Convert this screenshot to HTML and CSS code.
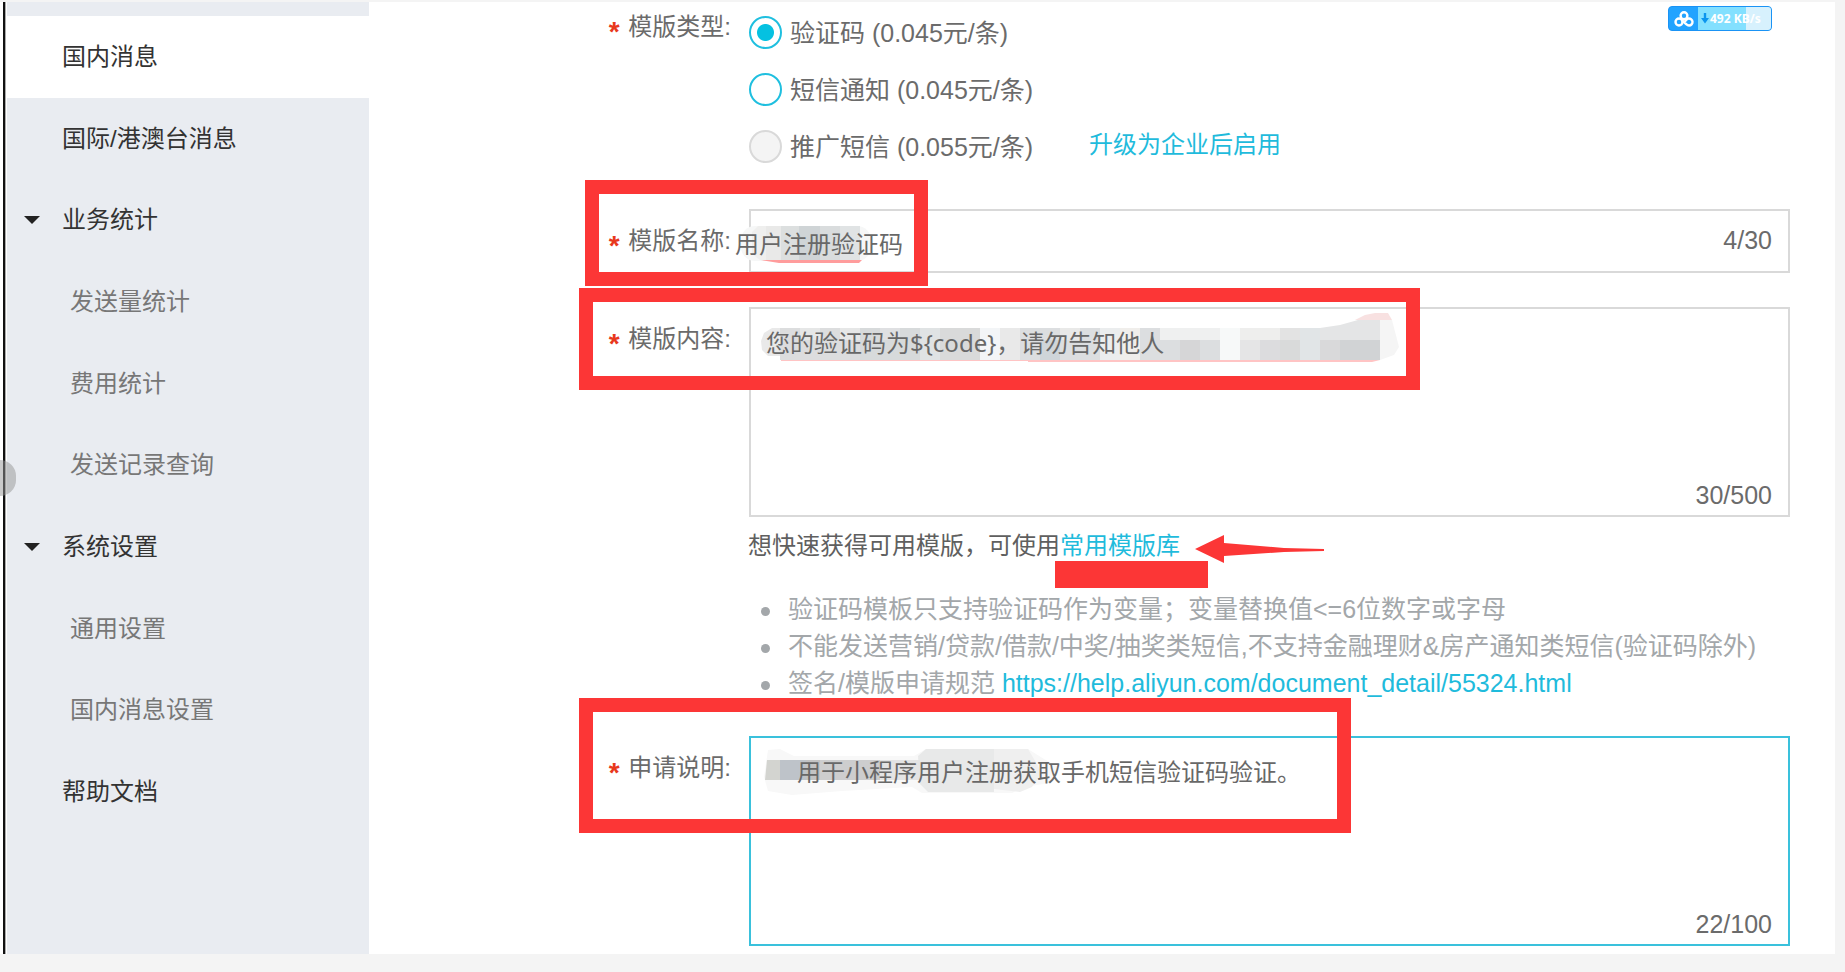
FILE: index.html
```
<!DOCTYPE html>
<html lang="zh-CN">
<head>
<meta charset="utf-8">
<title>短信模版申请</title>
<link rel="stylesheet" href="styles.css">
</head>
<body>
<div class="page">
  <aside class="sidebar">
    <nav>
      <ul class="menu">
        <li><a class="item active" href="#">国内消息</a></li>
        <li><a class="item" href="#">国际/港澳台消息</a></li>
        <li><a class="item group" href="#">业务统计</a></li>
        <li><a class="item sub" href="#">发送量统计</a></li>
        <li><a class="item sub" href="#">费用统计</a></li>
        <li><a class="item sub" href="#">发送记录查询</a></li>
        <li><a class="item group" href="#">系统设置</a></li>
        <li><a class="item sub" href="#">通用设置</a></li>
        <li><a class="item sub" href="#">国内消息设置</a></li>
        <li><a class="item" href="#">帮助文档</a></li>
      </ul>
    </nav>
    <button class="handle" type="button" aria-label="收起菜单"></button>
  </aside>

  <main class="main">
    <div class="speed">
      <svg class="cloud" viewBox="0 0 20 16" fill="none" stroke="#fff" stroke-width="2.4"><circle cx="10" cy="4.7" r="3.4"/><circle cx="5" cy="11" r="3.5"/><path d="M7.500 8.600L12.400 13.300A3.500 3.500 0 1 0 12 9.200L10.500 10.800"/></svg>
      <span class="rate"><svg class="down" viewBox="0 0 8 11"><path d="M2.800 0h2.400v5H8L4 10.500 0 5h2.800z" fill="#0c95ee"/></svg>492 KB/s</span>
    </div>

    <form class="form">
      <div class="row types" role="radiogroup" aria-labelledby="type-label">
        <span class="label" id="type-label"><i>*</i> 模版类型:</span>
        <div class="options">
          <div class="option"><input type="radio" name="type" id="t1" checked><label for="t1">验证码 (0.045元/条)</label></div>
          <div class="option"><input type="radio" name="type" id="t2"><label for="t2">短信通知 (0.045元/条)</label></div>
          <div class="option"><input type="radio" name="type" id="t3" disabled><label for="t3">推广短信 (0.055元/条)</label><a class="upgrade" href="#">升级为企业后启用</a></div>
        </div>
      </div>

      <div class="row">
        <label class="label" for="name"><i>*</i> 模版名称:</label>
        <div class="field short">
          <svg class="smudge" width="130" height="64" viewBox="741 209 130 64">
            <rect x="741" y="226" width="130" height="35" rx="14" fill="#f6f7f7"/>
            <path d="M758 226h8v34h-6l-8-6v-22z" fill="#efefee"/>
            <path d="M766 226h15v34h-15z" fill="#e9e9e8"/><path d="M781 226h18v34h-18z" fill="#dcdfdf"/>
            <path d="M799 226h21v34h-21z" fill="#cfd4d6"/><path d="M820 226h20v34h-20z" fill="#d9dcdd"/>
            <path d="M840 226h20v34h-20z" fill="#e0e3e4"/>
            <path d="M761 260h101l-3 3h-80z" fill="#ff9c9c"/>
          </svg>
          <input type="text" id="name" value="用户注册验证码">
          <span class="count">4/30</span>
        </div>
        <span class="mark mark-name"></span>
      </div>

      <div class="row">
        <label class="label" for="content"><i>*</i> 模版内容:</label>
        <div class="field tall">
          <svg class="smudge inner" width="660" height="68" viewBox="749 307 660 68">
            <path d="M780 328h-8l-8 5-3 8 1 9 6 6h12z" fill="#e9e9e9"/>
            <path d="M780 328h80v32h-80z" fill="#dcddde"/><path d="M800 328h20v12h-20zM840 328h20v12h-20z" fill="#e6e7e7"/>
            <path d="M860 328h80v32h-80z" fill="#d7dadb"/><path d="M880 328h20v12h-20z" fill="#dfe0e2"/><path d="M920 328h20v32h-20z" fill="#e0e3e4"/>
            <path d="M940 328h40v32h-40z" fill="#d9dada"/><path d="M980 328h20v32h-20z" fill="#f3f5f7"/>
            <path d="M1000 328h20v32h-20z" fill="#e9e9e9"/><path d="M1020 328h80v32h-80z" fill="#dcdee0"/>
            <path d="M1040 340h20v20h-20z" fill="#cfd5d9"/><path d="M1060 328h20v12h-20z" fill="#e9e9e8"/>
            <path d="M1100 328h20v32h-20z" fill="#ebedee"/><path d="M1120 328h20v32h-20z" fill="#f0eeeb"/>
            <path d="M1140 328h80v32h-80z" fill="#dcdee0"/><path d="M1160 328h60v12h-60z" fill="#eff0f0"/>
            <path d="M1180 340h20v20h-20z" fill="#d6d6d7"/><path d="M1220 328h20v32h-20z" fill="#f7f9f9"/>
            <path d="M1240 328h40v32h-40z" fill="#e5e5e6"/><path d="M1240 328h40v12h-40z" fill="#eeeeed"/><path d="M1260 340h20v20h-20z" fill="#dcdcde"/>
            <path d="M1280 328h20v32h-20z" fill="#d9dada"/><path d="M1280 328h20v12h-20z" fill="#e3e3e3"/>
            <path d="M1300 328h20v32h-20z" fill="#e1e5e7"/><path d="M1320 328l20-3 18-5h22v40h-60z" fill="#e4e5e6"/>
            <path d="M1320 340h20v20h-20z" fill="#d9d9da"/><path d="M1340 340h40v20h-40z" fill="#d1d3d5"/>
            <path d="M1355 320l10-5 10-2h13l4 7z" fill="#f8e1e1"/><path d="M1380 320h12l7 27-5 8-14 5z" fill="#f5f5f5"/>
            <path d="M781 360h599l-8 2h-344v-1h-247z" fill="#ffc4c4"/>
          </svg>
          <textarea id="content">您的验证码为${code}，请勿告知他人</textarea>
          <span class="count">30/500</span>
        </div>
        <span class="mark mark-content"></span>
      </div>

      <div class="help">
        <p class="tip">想快速获得可用模版，可使用<a href="#">常用模版库</a>
          <svg class="arrow" width="130" height="54" viewBox="1195 535 130 54"><path d="M1195 549l29-14v8l60 5 40 1v2l-40 1-60 4v7z" fill="#fc3636"/></svg>
          <span class="bar"></span>
        </p>
        <ul class="notes">
          <li>验证码模板只支持验证码作为变量；变量替换值&lt;=6位数字或字母</li>
          <li>不能发送营销/贷款/借款/中奖/抽奖类短信,不支持金融理财&amp;房产通知类短信(验证码除外)</li>
          <li>签名/模版申请规范 <a href="#">https://help.aliyun.com/document_detail/55324.html</a></li>
        </ul>
      </div>

      <div class="row">
        <label class="label" for="desc"><i>*</i> 申请说明:</label>
        <div class="field tall focused">
          <svg class="smudge inner" width="320" height="68" viewBox="749 736 320 68">
            <path d="M768 750l12-1 14 7h120l12-7h102l16 10 14 8-8 16-26 4-12 6h-90l-10-6-70 4-50 4-24-4-4-14z" fill="#f8f8f8"/>
            <path d="M918 756l8-7h68v43h-66l-8-8z" fill="#e8e9e9"/><path d="M994 749h34l6 10 8 14-10 14-12 5-26-3z" fill="#efefef"/>
            <path d="M767 760h13v20h-15z" fill="#d3d4d0"/><path d="M780 760h26v20h-26z" fill="#bec3c9"/>
            <path d="M806 760h14v20h-14z" fill="#c3c3c3"/><path d="M820 760h60v20h-60z" fill="#cdcdce"/>
            <path d="M880 760h40v20h-40z" fill="#e3e3e4"/>
          </svg>
          <textarea id="desc" class="indent">用于小程序用户注册获取手机短信验证码验证。</textarea>
          <span class="count">22/100</span>
        </div>
        <span class="mark mark-desc"></span>
      </div>
    </form>
  </main>
</div>
</body>
</html>
```
FILE: styles.css
```
* { box-sizing: border-box; }
body {
  margin: 0;
  background: #f4f4f4;
  color: #6b6b6b;
  font: 24px/36px "Liberation Sans", "Noto Sans CJK SC", sans-serif;
}
a { color: #1fbbdc; text-decoration: none; }
ul { list-style: none; margin: 0; padding: 0; }
p { margin: 0; }

.page {
  display: flex;
  min-height: calc(100vh - 20px);
  margin: 2px 10px 18px 0;
  background: #fff;
}

.sidebar {
  position: relative;
  flex: none;
  width: 369px;
  padding-left: 7px;
  background: linear-gradient(90deg, #fff 3px, #111 3px, #111 5px, #aaa 5px, #aaa 6px, #fff 6px, #fff 7px, #e9ecf1 7px);
}
.menu {
  display: grid;
  grid-template-rows: repeat(10, 1fr);
  height: 817px;
  margin-top: 14px;
}
.item {
  display: flex;
  align-items: center;
  height: 100%;
  padding-left: 55px;
  position: relative;
  color: #333;
}
.item.active { background: #fff; }
.item.sub { padding-left: 63px; color: #777; }
.group::before {
  content: "";
  position: absolute;
  left: 17px;
  border: 8px solid transparent;
  border-top-color: #222;
  border-bottom: 0;
}
.handle {
  position: absolute;
  left: 0;
  top: 458px;
  width: 16px;
  height: 36px;
  padding: 0;
  border: 0;
  border-radius: 0 18px 18px 0;
  background: rgba(150, 150, 150, .5);
}

.main { position: relative; flex: 1; min-width: 0; }
.form { padding: 2px 45px 8px 0; }

.speed {
  position: absolute;
  top: 4px;
  right: 63px;
  display: flex;
  width: 104px;
  height: 25px;
  overflow: hidden;
  border: 1px solid #1a93f5;
  border-radius: 4px;
  background: #22a3ff;
}
.cloud { width: 20px; height: 16px; margin: 4px 4px 0 5px; }
.rate {
  flex: 1;
  display: flex;
  align-items: center;
  gap: 1px;
  padding-left: 3px;
  background: linear-gradient(90deg, #83e0ff 48px, #d7f1fd 48px);
  color: #fff;
  font: bold 12px/23px "Noto Sans", sans-serif;
  white-space: nowrap;
}
.down { width: 8px; height: 11px; }

.row { position: relative; display: flex; gap: 18px; }
.row + .row { margin-top: 34px; }
.label { flex: none; width: 362px; padding-top: 14px; text-align: right; }
.label i {
  margin-right: 2px;
  color: #e8391d;
  font-size: 28px;
  font-style: normal;
  font-weight: bold;
  line-height: 24px;
  vertical-align: -6px;
}
.types .label { padding-top: 5px; }

.option { display: flex; align-items: center; height: 57px; font-size: 25px; }
.option input {
  appearance: none;
  width: 33px;
  height: 33px;
  margin: 0 8px 0 0;
  border: 2px solid #1fbfdf;
  border-radius: 50%;
  background: #fff;
}
.option input:checked { background: radial-gradient(circle, #05c1e1 8px, #fff 9px); }
.option input:disabled { border-color: #d9d9d9; background: #f4f4f4; }
.upgrade { margin-left: 56px; padding-bottom: 4px; font-size: 24px; }

.field {
  position: relative;
  flex: 1;
  display: flex;
  min-width: 0;
  border: 2px solid #d9d9d9;
}
.field.short { height: 64px; }
.field.tall { height: 210px; }
.field.focused { border-color: #3ac1dc; }
.field input, .field textarea {
  position: relative;
  flex: 1;
  min-width: 0;
  border: 0;
  outline: 0;
  background: none;
  color: #686868;
  font: 24px/36px "Noto Sans", "Noto Sans CJK SC", sans-serif;
}
.field input { margin-left: -16px; padding: 5px 120px 0 0; }
.field textarea { padding: 16px 120px 0 15px; resize: none; overflow: hidden; }
.field textarea.indent { padding-left: 46px; }
.count { position: absolute; right: 16px; bottom: 2px; font-size: 25px; }
.short .count { bottom: 13px; }
.smudge { position: absolute; left: -10px; top: -2px; }
.smudge.inner { left: -2px; }

.help { padding: 11px 0 34px 379px; }
.tip { position: relative; color: #5f5f5f; white-space: nowrap; }
.arrow { position: absolute; left: 447px; top: 7px; }
.bar { position: absolute; left: 307px; top: 33px; width: 153px; height: 27px; background: #fc3636; }
.notes { margin-top: 27px; color: #a3a7aa; font-size: 25px; line-height: 37px; }
.notes li { position: relative; padding-left: 40px; white-space: nowrap; }
.notes li::before {
  content: "";
  position: absolute;
  left: 13px;
  top: 16px;
  width: 9px;
  height: 9px;
  border-radius: 50%;
  background: #a3a7aa;
}

.mark { position: absolute; border: 14px solid #fc3636; pointer-events: none; }
.mark-name { left: 216px; top: -29px; width: 343px; height: 106px; }
.mark-content { left: 210px; top: -19px; width: 841px; height: 102px; }
.mark-desc { left: 210px; top: -38px; width: 772px; height: 135px; }
```
